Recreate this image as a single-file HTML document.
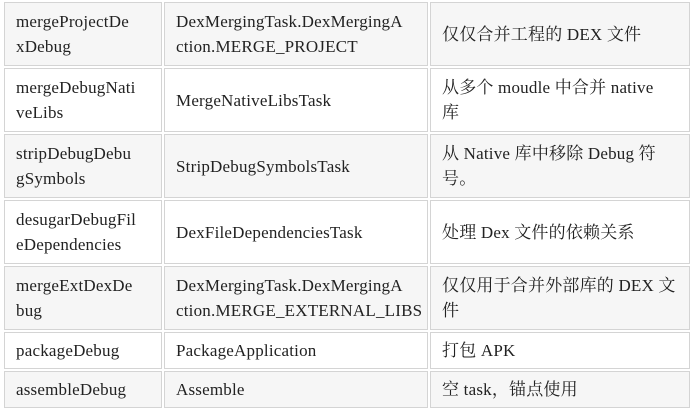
<!DOCTYPE html>
<html><head><meta charset="utf-8"><style>
html,body{margin:0;padding:0;background:#fff;width:695px;height:413px;overflow:hidden}
table{position:absolute;left:2px;top:0;border-collapse:separate;border-spacing:2px;table-layout:fixed;font-family:"Liberation Serif","Noto Serif CJK SC","Noto Sans CJK SC",serif;font-size:17px;letter-spacing:0.2px;color:#222}
td{border:1px solid #d4d4d4;padding:0 0 0 11px;line-height:25px;white-space:nowrap;vertical-align:middle;box-sizing:border-box;overflow:hidden}
tr.o td{background:#f6f6f6}
tr.t td{height:64px}
tr.s td{height:37px}
td.a{width:158px}td.b{width:264px}td.c{width:260px}
</style></head><body>
<table>
<tr class="o t"><td class="a">mergeProjectDe<br>xDebug</td><td class="b">DexMergingTask.DexMergingA<br>ction.MERGE_PROJECT</td><td class="c">仅仅合并工程的 DEX 文件</td></tr>
<tr class="t"><td class="a">mergeDebugNati<br>veLibs</td><td class="b">MergeNativeLibsTask</td><td class="c">从多个 moudle 中合并 native<br>库</td></tr>
<tr class="o t"><td class="a">stripDebugDebu<br>gSymbols</td><td class="b">StripDebugSymbolsTask</td><td class="c">从 Native 库中移除 Debug 符<br>号。</td></tr>
<tr class="t"><td class="a">desugarDebugFil<br>eDependencies</td><td class="b">DexFileDependenciesTask</td><td class="c">处理 Dex 文件的依赖关系</td></tr>
<tr class="o t"><td class="a">mergeExtDexDe<br>bug</td><td class="b">DexMergingTask.DexMergingA<br>ction.MERGE_EXTERNAL_LIBS</td><td class="c">仅仅用于合并外部库的 DEX 文<br>件</td></tr>
<tr class="s"><td class="a">packageDebug</td><td class="b">PackageApplication</td><td class="c">打包 APK</td></tr>
<tr class="o s"><td class="a">assembleDebug</td><td class="b">Assemble</td><td class="c">空 task，锚点使用</td></tr>
</table>
</body></html>
